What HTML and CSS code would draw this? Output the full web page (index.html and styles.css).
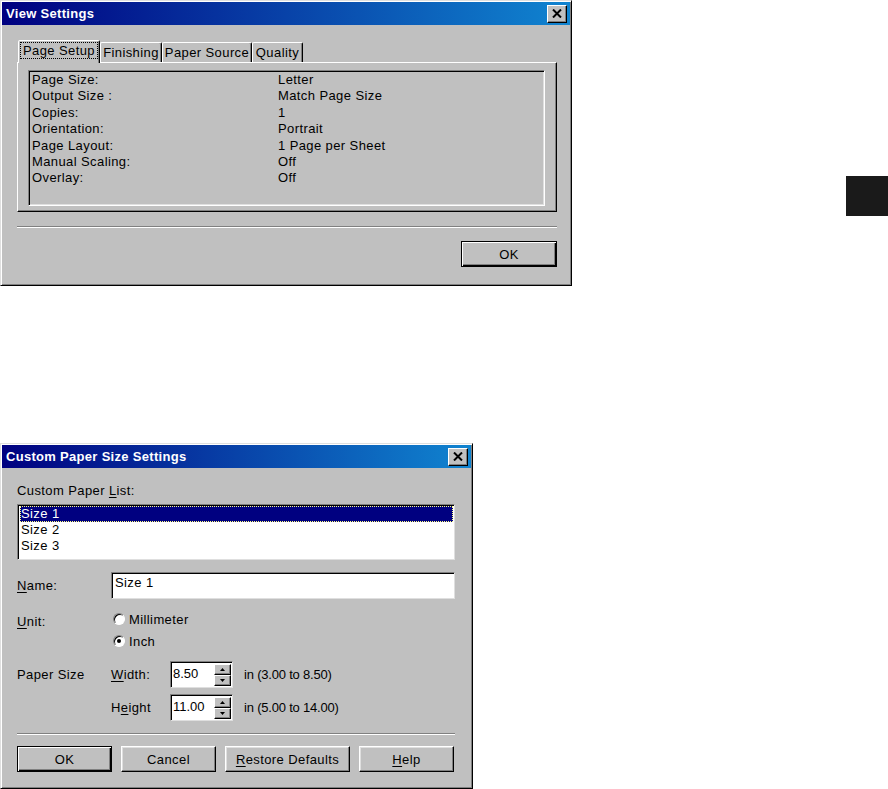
FILE: index.html
```html
<!DOCTYPE html>
<html lang="en">
<head>
  <meta charset="UTF-8" />
  <title>Printer Dialogs</title>
  <link rel="stylesheet" href="styles.css">
</head>
<body>
  <div class="top-row">
    <div class="window view-win">
      <div class="titlebar">
        <span class="title">View Settings</span>
        <button class="close-btn" aria-label="Close">
          <svg width="10" height="9" viewBox="0 0 10 9"><path d="M1 0.5 L9 8.5 M9 0.5 L1 8.5" stroke="#000" stroke-width="2"/></svg>
        </button>
      </div>
      <div class="content">
        <div class="tabs">
          <div class="tab active w1"><span class="focus">Page Setup</span></div>
          <div class="tab w2">Finishing</div>
          <div class="tab w3">Paper Source</div>
          <div class="tab w4">Quality</div>
        </div>
        <div class="tab-panel">
          <div class="info-box">
            <div class="info-row"><span>Page Size:</span><span>Letter</span></div>
            <div class="info-row"><span>Output Size :</span><span>Match Page Size</span></div>
            <div class="info-row"><span>Copies:</span><span>1</span></div>
            <div class="info-row"><span>Orientation:</span><span>Portrait</span></div>
            <div class="info-row"><span>Page Layout:</span><span>1 Page per Sheet</span></div>
            <div class="info-row"><span>Manual Scaling:</span><span>Off</span></div>
            <div class="info-row"><span>Overlay:</span><span>Off</span></div>
          </div>
        </div>
        <div class="separator"></div>
        <div class="btn-row right">
          <button class="btn default ok-wide">OK</button>
        </div>
      </div>
    </div>
    <div class="black-square"></div>
  </div>

  <div class="window paper-win">
    <div class="titlebar">
      <span class="title">Custom Paper Size Settings</span>
      <button class="close-btn" aria-label="Close">
        <svg width="10" height="9" viewBox="0 0 10 9"><path d="M1 0.5 L9 8.5 M9 0.5 L1 8.5" stroke="#000" stroke-width="2"/></svg>
      </button>
    </div>
    <div class="content">
      <div class="list-label">Custom Paper <u>L</u>ist:</div>
      <div class="listbox">
        <div class="list-item selected">Size 1</div>
        <div class="list-item">Size 2</div>
        <div class="list-item">Size 3</div>
      </div>

      <div class="form-row name-row">
        <span class="form-label"><u>N</u>ame:</span>
        <div class="textbox wide">Size 1</div>
      </div>

      <div class="form-row unit-row">
        <span class="form-label unit-label"><u>U</u>nit:</span>
        <div class="radios">
          <div class="radio-row"><span class="radio"></span>Millimeter</div>
          <div class="radio-row"><span class="radio checked"></span>Inch</div>
        </div>
      </div>

      <div class="form-row size-row">
        <span class="form-label size-label">Paper Size</span>
        <div class="dims">
          <div class="dim-row">
            <span class="dim-label"><u>W</u>idth:</span>
            <div class="spin">
              <span class="spin-value">8.50</span>
              <div class="spin-btns">
                <span class="spin-btn"><svg width="5" height="3" viewBox="0 0 5 3"><path d="M2.5 0 L5 3 L0 3 Z" fill="#000"/></svg></span>
                <span class="spin-btn"><svg width="5" height="3" viewBox="0 0 5 3"><path d="M0 0 L5 0 L2.5 3 Z" fill="#000"/></svg></span>
              </div>
            </div>
            <span class="range">in (3.00 to 8.50)</span>
          </div>
          <div class="dim-row">
            <span class="dim-label">H<u>e</u>ight</span>
            <div class="spin">
              <span class="spin-value">11.00</span>
              <div class="spin-btns">
                <span class="spin-btn"><svg width="5" height="3" viewBox="0 0 5 3"><path d="M2.5 0 L5 3 L0 3 Z" fill="#000"/></svg></span>
                <span class="spin-btn"><svg width="5" height="3" viewBox="0 0 5 3"><path d="M0 0 L5 0 L2.5 3 Z" fill="#000"/></svg></span>
              </div>
            </div>
            <span class="range">in (5.00 to 14.00)</span>
          </div>
        </div>
      </div>

      <div class="separator wide-sep"></div>
      <div class="btn-row tight">
        <button class="btn default">OK</button>
        <button class="btn">Cancel</button>
        <button class="btn restore"><u>R</u>estore Defaults</button>
        <button class="btn"><u>H</u>elp</button>
      </div>
    </div>
  </div>
</body>
</html>
```

FILE: styles.css
```css
body {
  margin: 0;
  background: #fff;
  font-family: "Liberation Sans", Arial, sans-serif;
  font-size: 13px;
  letter-spacing: 0.4px;
  color: #000;
}
u {
  text-decoration-thickness: 1px;
  text-underline-offset: 2px;
}

.top-row {
  display: flex;
  align-items: flex-start;
}
.black-square {
  width: 42px;
  height: 40px;
  margin-left: 274px;
  margin-top: 176px;
  background: #1a1a1a;
}

/* window frame */
.window {
  box-sizing: border-box;
  background: #c0c0c0;
  border: 1px solid;
  border-color: #dfdfdf #000 #000 #dfdfdf;
  box-shadow: inset 1px 1px #fff, inset -1px -1px #808080;
  padding: 1px;
}
.view-win {
  width: 572px;
  height: 286px;
}
.paper-win {
  width: 473px;
  height: 346px;
  margin-top: 157px;
}

.titlebar {
  height: 23px;
  display: flex;
  align-items: center;
  justify-content: space-between;
  padding: 0 3px 0 4px;
  background: linear-gradient(90deg, #000080, #1084d0);
}
.title {
  color: #fff;
  font-weight: bold;
  font-size: 13px;
  letter-spacing: 0.3px;
}
.close-btn {
  width: 20px;
  height: 18px;
  padding: 0;
  display: flex;
  align-items: center;
  justify-content: center;
  background: #c0c0c0;
  border: 1px solid;
  border-color: #fff #000 #000 #fff;
  box-shadow: inset -1px -1px #808080;
}

.content {
  padding: 15px 13px 0 15px;
}

/* tabs */
.tabs {
  display: flex;
  align-items: flex-end;
  height: 22px;
  padding-left: 1px;
}
.tab {
  box-sizing: border-box;
  height: 20px;
  line-height: 19px;
  text-align: center;
  border: 1px solid;
  border-bottom: none;
  border-color: #fff #000 transparent #fff;
  border-radius: 2px 2px 0 0;
  box-shadow: inset -1px 0 #808080;
}
.tab.active {
  height: 23px;
  margin-bottom: -1px;
  position: relative;
  background: #c0c0c0;
  line-height: 19px;
}
.w1 { width: 82px; }
.w2 { width: 62px; }
.w3 { width: 90px; }
.w4 { width: 51px; }
.focus {
  outline: 1px dotted #000;
  outline-offset: 0;
  padding: 0 2px;
}

.tab-panel {
  box-sizing: border-box;
  height: 150px;
  border: 1px solid;
  border-color: #fff #000 #000 #fff;
  box-shadow: inset -1px -1px #808080;
  padding: 7px 11px 0 10px;
}
.info-box {
  box-sizing: border-box;
  height: 136px;
  border: 1px solid;
  border-color: #808080 #fff #fff #808080;
  box-shadow: inset 1px 1px #000, inset -1px -1px #dfdfdf;
  padding: 1px 3px;
}
.info-row {
  display: grid;
  grid-template-columns: 246px 1fr;
  line-height: 16.4px;
}

.separator {
  height: 0;
  margin-top: 14px;
  border-top: 1px solid #808080;
  border-bottom: 1px solid #fff;
}

.btn-row {
  display: flex;
  gap: 9px;
  margin-top: 13px;
}
.btn-row.right {
  justify-content: flex-end;
}
.btn-row.tight {
  margin-top: 11px;
}
.btn {
  box-sizing: border-box;
  width: 95px;
  height: 26px;
  padding: 0;
  font: inherit;
  letter-spacing: inherit;
  color: #000;
  background: #c0c0c0;
  border: 1px solid;
  border-color: #fff #000 #000 #fff;
  box-shadow: inset -1px -1px #808080, inset 1px 1px #dfdfdf;
}
.btn.default {
  border: 1px solid #000;
  box-shadow: inset 1px 1px #fff, inset -1px -1px #000, inset -2px -2px #808080;
}
.ok-wide { width: 96px; }
.btn.restore { width: 125px; }

/* custom paper dialog */
.list-label {
  line-height: 16px;
}
.listbox {
  box-sizing: border-box;
  width: 438px;
  height: 56px;
  margin-top: 5px;
  background: #fff;
  border: 1px solid;
  border-color: #808080 #dfdfdf #dfdfdf #808080;
  box-shadow: inset 1px 1px #000;
  padding: 1px 1px 0 2px;
}
.list-item {
  height: 16px;
  line-height: 16px;
  padding-left: 1px;
}
.list-item.selected {
  box-sizing: border-box;
  background: #000080;
  color: #fff;
  outline: 1px dotted #ffff80;
  outline-offset: -1px;
}

.form-row {
  display: flex;
  align-items: flex-start;
}
.form-label {
  width: 94px;
  flex-shrink: 0;
}
.name-row {
  margin-top: 12px;
  align-items: center;
}
.textbox {
  box-sizing: border-box;
  height: 27px;
  background: #fff;
  border: 1px solid;
  border-color: #808080 #dfdfdf #dfdfdf #808080;
  box-shadow: inset 1px 1px #000;
  padding: 1px 3px 0 3px;
  line-height: 18px;
}
.textbox.wide {
  width: 344px;
}

.unit-row {
  margin-top: 9px;
}
.unit-label {
  padding-top: 6px;
}
.radio-row {
  height: 22px;
  display: flex;
  align-items: center;
  gap: 4px;
  padding-left: 2px;
}
.radio {
  box-sizing: border-box;
  width: 12px;
  height: 12px;
  border-radius: 50%;
  background: #fff;
  border: 1px solid;
  border-color: #808080 #fff #fff #808080;
  box-shadow: inset 1px 1px #000;
  position: relative;
}
.radio.checked::after {
  content: "";
  position: absolute;
  left: 3px;
  top: 3px;
  width: 4px;
  height: 4px;
  border-radius: 50%;
  background: #000;
}

.size-row {
  margin-top: 9px;
}
.size-label {
  padding-top: 6px;
}
.dims {
  display: flex;
  flex-direction: column;
  gap: 6px;
}
.dim-row {
  display: flex;
  align-items: center;
}
.dim-label {
  width: 59px;
}
.spin {
  box-sizing: border-box;
  width: 63px;
  height: 27px;
  display: flex;
  justify-content: space-between;
  background: #fff;
  border: 1px solid;
  border-color: #808080 #dfdfdf #dfdfdf #808080;
  box-shadow: inset 1px 1px #000;
  padding: 2px 1px 1px 2px;
}
.spin-value {
  line-height: 20px;
  letter-spacing: 0;
}
.spin-btns {
  display: flex;
  flex-direction: column;
  width: 17px;
}
.spin-btn {
  box-sizing: border-box;
  flex: 1;
  display: flex;
  align-items: center;
  justify-content: center;
  background: #c0c0c0;
  border: 1px solid;
  border-color: #fff #000 #000 #fff;
  box-shadow: inset -1px -1px #808080;
}
.range {
  margin-left: 11px;
  letter-spacing: -0.2px;
}

.wide-sep {
  width: 438px;
  margin-top: 12px;
}
```
